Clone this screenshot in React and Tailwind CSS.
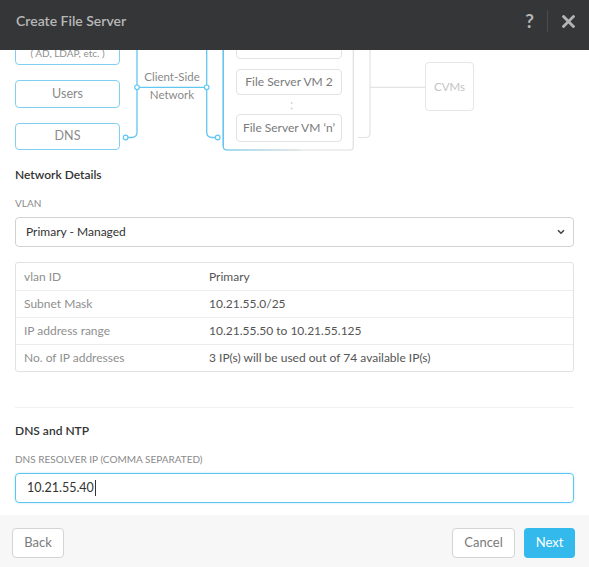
import React from "react";

const BLUE = "#62c7f2";
const GREY = "#e3e3e3";

function Diagram() {
  return (
    <div className="relative h-[105px] overflow-hidden">
      <svg
        className="absolute left-0 top-0"
        width="589"
        height="105"
        viewBox="0 50 589 105"
        fill="none"
      >
        <defs>
          <linearGradient id="bb" gradientUnits="userSpaceOnUse" x1="230" y1="0" x2="300" y2="0">
            <stop offset="0" stopColor={BLUE} />
            <stop offset="1" stopColor="#dedede" />
          </linearGradient>
        </defs>
        <path d="M137 20 V132 Q137 137.5 131.5 137.5 H128" stroke={BLUE} strokeWidth="1.3" />
        <path d="M137 87.3 H206.7" stroke={BLUE} strokeWidth="1.3" />
        <path d="M206.7 20 V132 Q206.7 137.5 212.2 137.5 H215.3" stroke={BLUE} strokeWidth="1.3" />
        <circle cx="125.6" cy="137.5" r="2.3" fill="white" stroke={BLUE} strokeWidth="1.2" />
        <circle cx="137" cy="87.3" r="2.3" fill="white" stroke={BLUE} strokeWidth="1.2" />
        <circle cx="206.7" cy="87.3" r="2.3" fill="white" stroke={BLUE} strokeWidth="1.2" />
        <circle cx="217.7" cy="137.5" r="2.3" fill="white" stroke={BLUE} strokeWidth="1.2" />
        <path d="M223.3 20 V146.5 Q223.3 150 226.8 150 H350 Q353.3 150 353.3 146.5 V20" stroke="#dedede" strokeWidth="1.2" />
        <path d="M223.3 20 V146.5 Q223.3 150 226.8 150 H300" stroke="url(#bb)" strokeWidth="1.2" />
        <path d="M223.3 20 V146.5" stroke={BLUE} strokeWidth="1.3" />
        <path d="M370 20 V133 Q370 137.5 365.5 137.5 H358" stroke={GREY} strokeWidth="1.2" />
        <path d="M370 87.3 H425.7" stroke={GREY} strokeWidth="1.2" />
        <circle cx="291.7" cy="103" r="0.9" fill="#cfcfcf" />
        <circle cx="291.7" cy="108.5" r="0.9" fill="#cfcfcf" />
      </svg>

      <div className="absolute left-[15px] top-[-30px] flex h-[45px] w-[105px] flex-col items-center justify-end rounded-[4px] border border-[#7fd0f3] pb-[5px] text-[10px] leading-[12px] text-[#8f8f8f]">
        <span>( AD, LDAP, etc. )</span>
      </div>
      <div className="absolute left-[15px] top-[30px] flex h-[28px] w-[105px] items-center justify-center rounded-[4px] border border-[#7fd0f3] text-[12.5px] text-[#8a8a8a]">
        Users
      </div>
      <div className="absolute left-[15px] top-[73px] flex h-[27px] w-[105px] items-center justify-center rounded-[4px] border border-[#7fd0f3] text-[12.5px] text-[#8a8a8a]">
        DNS
      </div>

      <div className="absolute left-[138px] top-[18px] w-[68px] text-center text-[11.5px] leading-[18px] text-[#8a8a8a]">
        <div>Client-Side</div>
        <div>Network</div>
      </div>

      <div className="absolute left-[236px] top-[-17px] flex h-[26px] w-[106px] items-center justify-center rounded-[4px] border border-[#e2e2e2] text-[12px] text-[#7a7a7a]">
        File Server VM 1
      </div>
      <div className="absolute left-[236px] top-[19px] flex h-[26px] w-[106px] items-center justify-center rounded-[4px] border border-[#e2e2e2] text-[12px] text-[#7a7a7a]">
        File Server VM 2
      </div>
      <div className="absolute left-[236px] top-[64px] flex h-[28px] w-[106px] items-center justify-center rounded-[4px] border border-[#e2e2e2] text-[12px] text-[#7a7a7a]">
        File Server VM ‘n’
      </div>

      <div className="absolute left-[425px] top-[12px] flex h-[49px] w-[49px] items-center justify-center rounded-[4px] border border-[#e6e6e6] text-[11.5px] text-[#c4c4c4]">
        CVMs
      </div>
    </div>
  );
}

const rows = [
  ["vlan ID", "Primary"],
  ["Subnet Mask", "10.21.55.0/25"],
  ["IP address range", "10.21.55.50 to 10.21.55.125"],
  ["No. of IP addresses", "3 IP(s) will be used out of 74 available IP(s)"],
];

export default function App() {
  return (
    <div
      className="relative h-[567px] w-[589px] overflow-hidden bg-white"
      style={{ fontFamily: "Lato, 'Open Sans', sans-serif" }}
    >
      <div className="flex h-[50px] items-start bg-[#353638] pl-[16px] pr-[14px] pt-[11px]">
        <div className="text-[14px] font-semibold leading-[20px] text-[#b8b8b8]">Create File Server</div>
        <div className="ml-auto flex items-start">
          <span className="mt-[-1px] text-[19px] font-bold leading-[22px] text-[#b4b4b4]">?</span>
          <span className="ml-[13px] mt-[-1px] h-[22px] w-px bg-[#4a4b4d]" />
          <svg className="ml-[14px] mt-[4px]" width="13" height="13" viewBox="0 0 13 13">
            <path d="M1.6 1.6 L11.4 11.4 M11.4 1.6 L1.6 11.4" stroke="#b4b4b4" strokeWidth="2.8" strokeLinecap="square" />
          </svg>
        </div>
      </div>

      <Diagram />

      <div className="px-[15px]">
        <div className="mt-[10px] text-[12px] font-semibold leading-[20px] text-[#333]">Network Details</div>
        <div className="mt-[11px] text-[10px] uppercase leading-[14px] text-[#8a8a8a]">VLAN</div>
        <div className="mt-[7px] flex h-[30px] items-center rounded-[4px] border border-[#d2d2d2] pl-[10px] pr-[8px] text-[12px] text-[#333]">
          <span>Primary - Managed</span>
          <svg className="ml-auto" width="8" height="6" viewBox="0 0 8 6">
            <path d="M1 1.2 L4 4.2 L7 1.2" stroke="#444" strokeWidth="1.6" fill="none" />
          </svg>
        </div>

        <div className="mt-[15px] overflow-hidden rounded-[3px] border border-[#e2e2e2]">
          {rows.map(([k, v], i) => (
            <div
              key={k}
              className={
                "flex h-[27px] items-center text-[12px] " +
                (i > 0 ? "border-t border-[#ececec]" : "")
              }
            >
              <div className="w-[193px] pl-[8px] text-[#8f8f8f]">{k}</div>
              <div className="text-[#555]">{v}</div>
            </div>
          ))}
        </div>

        <div className="mt-[35px] h-px bg-[#f1f1f1]" />

        <div className="mt-[13px] text-[12px] font-semibold leading-[20px] text-[#333]">DNS and NTP</div>
        <div className="mt-[11px] text-[10px] uppercase leading-[14px] text-[#8a8a8a]">DNS resolver IP (comma separated)</div>
        <div className="mt-[7px] flex h-[30px] items-center rounded-[4px] border border-[#5cc6f2] pl-[11px] text-[12.5px] text-[#333] shadow-[0_0_2px_rgba(92,198,242,0.5)]">
          <span>10.21.55.40</span>
          <span className="ml-px h-[16px] w-px bg-[#333]" />
        </div>
      </div>

      <div className="absolute bottom-0 left-0 right-0 flex h-[52px] items-start bg-[#f7f7f7] pl-[12px] pr-[14px] pt-[13px]">
        <button className="h-[30px] w-[52px] rounded-[4px] border border-[#d4d4d4] bg-white text-[13px] text-[#7a7a7a]">
          Back
        </button>
        <button className="ml-auto h-[30px] w-[63px] rounded-[4px] border border-[#d4d4d4] bg-white text-[13px] text-[#7a7a7a]">
          Cancel
        </button>
        <button className="ml-[9px] h-[30px] w-[51px] rounded-[4px] bg-[#33b9ec] text-[13px] text-white">
          Next
        </button>
      </div>
    </div>
  );
}
